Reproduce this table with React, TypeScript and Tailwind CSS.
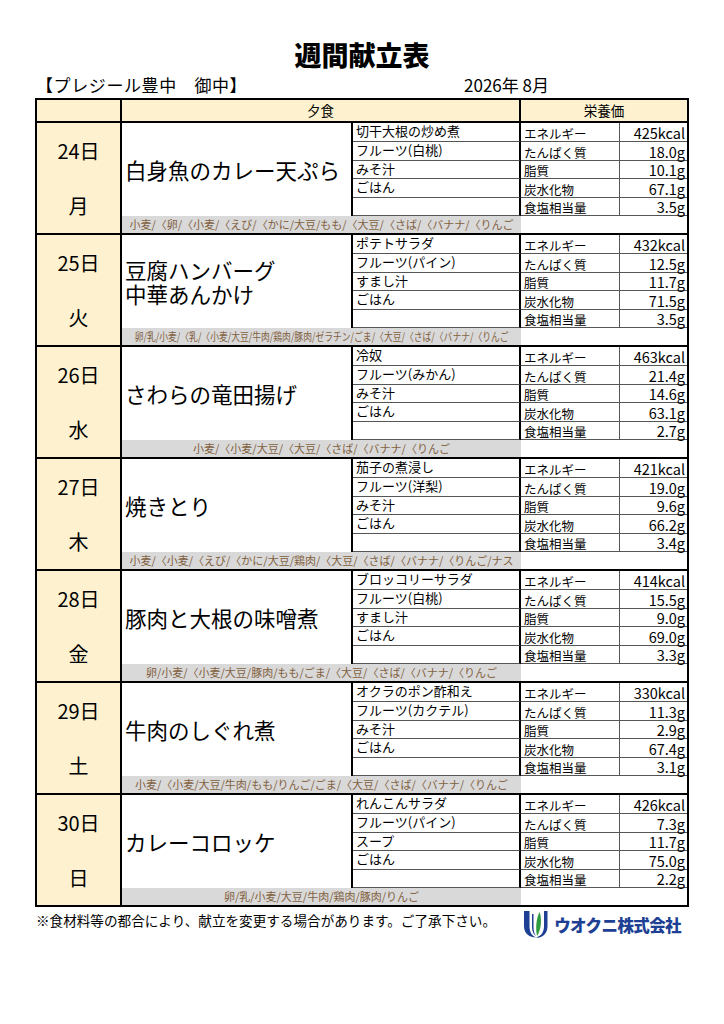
import React from "react";

type Day = {
  date: string;
  wd: string;
  main: string[];
  sides: string[];
  nut: string[];
  allergen: string;
  scale?: boolean;
};

const days: Day[] = [
  {
    date: "24日",
    wd: "月",
    main: ["白身魚のカレー天ぷら"],
    sides: ["切干大根の炒め煮", "フルーツ(白桃)", "みそ汁", "ごはん"],
    nut: ["425kcal", "18.0g", "10.1g", "67.1g", "3.5g"],
    allergen: "小麦/〈卵/〈小麦/〈えび/〈かに/大豆/もも/〈大豆/〈さば/〈バナナ/〈りんご",
  },
  {
    date: "25日",
    wd: "火",
    main: ["豆腐ハンバーグ", "中華あんかけ"],
    sides: ["ポテトサラダ", "フルーツ(パイン)", "すまし汁", "ごはん"],
    nut: ["432kcal", "12.5g", "11.7g", "71.5g", "3.5g"],
    allergen:
      "卵/乳/小麦/〈乳/〈小麦/大豆/牛肉/鶏肉/豚肉/ゼラチン/ごま/〈大豆/〈さば/〈バナナ/〈りんご",
    scale: true,
  },
  {
    date: "26日",
    wd: "水",
    main: ["さわらの竜田揚げ"],
    sides: ["冷奴", "フルーツ(みかん)", "みそ汁", "ごはん"],
    nut: ["463kcal", "21.4g", "14.6g", "63.1g", "2.7g"],
    allergen: "小麦/〈小麦/大豆/〈大豆/〈さば/〈バナナ/〈りんご",
  },
  {
    date: "27日",
    wd: "木",
    main: ["焼きとり"],
    sides: ["茄子の煮浸し", "フルーツ(洋梨)", "みそ汁", "ごはん"],
    nut: ["421kcal", "19.0g", "9.6g", "66.2g", "3.4g"],
    allergen: "小麦/〈小麦/〈えび/〈かに/大豆/鶏肉/〈大豆/〈さば/〈バナナ/〈りんご/ナス",
  },
  {
    date: "28日",
    wd: "金",
    main: ["豚肉と大根の味噌煮"],
    sides: ["ブロッコリーサラダ", "フルーツ(白桃)", "すまし汁", "ごはん"],
    nut: ["414kcal", "15.5g", "9.0g", "69.0g", "3.3g"],
    allergen: "卵/小麦/〈小麦/大豆/豚肉/もも/ごま/〈大豆/〈さば/〈バナナ/〈りんご",
  },
  {
    date: "29日",
    wd: "土",
    main: ["牛肉のしぐれ煮"],
    sides: ["オクラのポン酢和え", "フルーツ(カクテル)", "みそ汁", "ごはん"],
    nut: ["330kcal", "11.3g", "2.9g", "67.4g", "3.1g"],
    allergen: "小麦/〈小麦/大豆/牛肉/もも/りんご/ごま/〈大豆/〈さば/〈バナナ/〈りんご",
  },
  {
    date: "30日",
    wd: "日",
    main: ["カレーコロッケ"],
    sides: ["れんこんサラダ", "フルーツ(パイン)", "スープ", "ごはん"],
    nut: ["426kcal", "7.3g", "11.7g", "75.0g", "2.2g"],
    allergen: "卵/乳/小麦/大豆/牛肉/鶏肉/豚肉/りんご",
  },
];

const labels = ["エネルギー", "たんぱく質", "脂質", "炭水化物", "食塩相当量"];
const rowStart = ["row-start-1", "row-start-2", "row-start-3", "row-start-4", "row-start-5"];

function Block({ d }: { d: Day }) {
  const sides = [...d.sides, ""];
  return (
    <div className="grid grid-cols-[85px_231px_168px_99px_67px] grid-rows-[19px_19px_18px_19px_18px_17px] border-t-2 border-black">
      <div className="col-start-1 row-start-1 row-span-6 bg-[#fdf1d0] border-r-2 border-black flex flex-col items-center pt-[16px]">
        <div className="h-[24px] leading-[24px] text-[20px]">{d.date}</div>
        <div className="mt-[31px] h-[24px] leading-[24px] text-[20px]">{d.wd}</div>
      </div>
      <div className="col-start-2 row-start-1 row-span-5 border-r-2 border-black flex flex-col justify-center pl-[3px] text-[21.5px] leading-[24px]">
        {d.main.map((m, i) => (
          <div key={i}>{m}</div>
        ))}
      </div>
      {sides.map((s, i) => (
        <div
          key={i}
          className={`col-start-3 ${rowStart[i]} border-r-2 border-r-black border-b border-b-[#555] pl-[3px] text-[13px] leading-[16px] whitespace-nowrap`}
        >
          {s}
        </div>
      ))}
      {labels.map((l, i) => (
        <div
          key={"l" + i}
          className={`col-start-4 ${rowStart[i]} border-r border-b border-[#555] flex items-end pl-[3px] text-[12.5px] leading-[15px] whitespace-nowrap`}
        >
          {l}
        </div>
      ))}
      {d.nut.map((v, i) => (
        <div
          key={"v" + i}
          className={`col-start-5 ${rowStart[i]} border-b border-[#555] flex items-end justify-end pr-[2px] text-[14.5px] leading-[16px] whitespace-nowrap`}
        >
          {v}
        </div>
      ))}
      <div className="col-start-2 col-span-2 row-start-6 bg-[#d9d9d9] flex items-center justify-center overflow-hidden">
        <span
          className={`inline-block whitespace-nowrap text-[11px] leading-[17px] text-[#82613f] ${
            d.scale ? "scale-x-[0.8]" : ""
          }`}
        >
          {d.allergen}
        </span>
      </div>
      <div className="col-start-4 col-span-2 row-start-6"></div>
    </div>
  );
}

function Logo() {
  return (
    <div className="flex items-center gap-[4px]">
      <svg width="28" height="32" viewBox="0 0 28 32">
        <path d="M2 2 H7.5 V17 C7.5 23.5 10 26.5 14 28.5 C8 28.5 2 25 2 17 Z" fill="#1d3f94" />
        <path d="M10 5 H11.5 V18 C11.5 22 12.5 25 14 27 C11.5 25.5 10 22 10 18 Z" fill="#1d3f94" />
        <path d="M17.5 3 C20 9 19.5 20 15 27 C13.5 20 14 10 17.5 3 Z" fill="#2e9b3e" />
        <path d="M22 2 H25.5 V17 C25.5 25 20 29.5 14 28.5 C19 27 22 23.5 22 17 Z" fill="#1d3f94" />
      </svg>
      <span className="text-[16.5px] font-black text-[#1d3f94] leading-none tracking-[-0.6px]">
        ウオクニ株式会社
      </span>
    </div>
  );
}

export default function App() {
  return (
    <div
      className="w-[724px] h-[1024px] bg-white text-black"
      style={{ fontFamily: '"Noto Sans CJK JP", "Noto Sans", sans-serif' }}
    >
      <div className="w-[654px] mx-auto pt-[38px]">
        <div className="text-center text-[27px] font-black leading-[34px] h-[34px]">週間献立表</div>
        <div className="flex items-center h-[26px] pl-[1px] text-[17px] leading-[20px]">
          <span className="tracking-[0.6px]">【プレジール豊中　御中】</span>
          <span className="ml-auto mr-[140px]">2026年 8月</span>
        </div>
        <div className="border-2 border-black">
          <div className="grid grid-cols-[85px_399px_166px] h-[21px] bg-[#fdf1d0] text-[13.5px] leading-[21px]">
            <div className="border-r-2 border-black"></div>
            <div className="border-r-2 border-black text-center">夕食</div>
            <div className="text-center">栄養価</div>
          </div>
          {days.map((d) => (
            <Block key={d.date} d={d} />
          ))}
        </div>
        <div className="flex items-start justify-between mt-[2px]">
          <div className="text-[13.6px] leading-[20px] pl-[1px] pt-[1px]">
            ※食材料等の都合により、献立を変更する場合があります。ご了承下さい。
          </div>
          <div className="mr-[8px]">
            <Logo />
          </div>
        </div>
      </div>
    </div>
  );
}
